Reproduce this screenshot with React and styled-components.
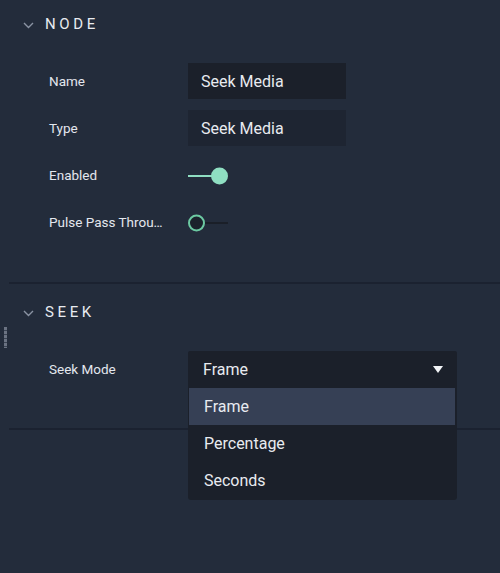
import React, { useState } from "react";
import styled, { createGlobalStyle } from "styled-components";

const GlobalStyle = createGlobalStyle`
  html, body {
    margin: 0;
    padding: 0;
    background: #232c3b;
    font-family: Roboto, "Liberation Sans", sans-serif;
  }
`;

const Panel = styled.div`
  position: relative;
  width: 500px;
  height: 573px;
  padding-left: 9px;
  box-sizing: border-box;
  background: #232c3b;
  color: #e8ebf0;
`;

const Grip = styled.div`
  position: absolute;
  left: 4px;
  top: 327px;
  width: 3px;
  height: 21px;
  background: repeating-linear-gradient(
    to bottom,
    #6b7382 0 3px,
    #3a4352 3px 4px
  );
`;

const Section = styled.section`
  display: flex;
  flex-direction: column;
  padding-bottom: ${(p) => p.$bottom}px;
  border-bottom: 2px solid #1b2230;
`;

const Header = styled.div`
  display: flex;
  align-items: center;
  height: 48px;
  margin-top: ${(p) => p.$top || 0}px;
  padding-left: 14px;
  gap: 11px;
`;

const Title = styled.span`
  font-size: 15px;
  font-weight: 400;
  letter-spacing: 3.6px;
  color: #e8ebf0;
`;

const Rows = styled.div`
  display: flex;
  flex-direction: column;
  gap: 11px;
  margin-top: 15px;
`;

const Row = styled.div`
  display: flex;
  align-items: center;
  height: 36px;
`;

const Label = styled.span`
  width: 116px;
  padding-left: 40px;
  margin-right: 23px;
  flex-shrink: 0;
  font-size: 13.5px;
  color: #e3e7ee;
  white-space: nowrap;
  overflow: hidden;
  text-overflow: ellipsis;
`;

const Field = styled.div`
  width: 158px;
  height: 36px;
  display: flex;
  align-items: center;
  padding-left: 13px;
  box-sizing: border-box;
  background: ${(p) => (p.$muted ? "#1e2532" : "#1b202a")};
  font-size: 16px;
  color: #e8ebf0;
`;

const Toggle = styled.div`
  position: relative;
  width: 40px;
  height: 20px;
  display: flex;
  align-items: center;
  margin-top: 1px;
`;

const Track = styled.div`
  width: ${(p) => (p.$on ? "24px" : "23px")};
  height: 2px;
  margin-left: ${(p) => (p.$on ? "0" : "17px")};
  background: ${(p) => (p.$on ? "#8fdfc2" : "#1a1f28")};
`;

const Thumb = styled.div`
  position: absolute;
  top: 50%;
  left: ${(p) => (p.$on ? "23px" : "0")};
  transform: translateY(-50%);
  width: 17px;
  height: 17px;
  border-radius: 50%;
  box-sizing: border-box;
  background: ${(p) => (p.$on ? "#8fdfc2" : "#1b222c")};
  border: ${(p) => (p.$on ? "none" : "2.5px solid #6cc9a2")};
`;

const Select = styled.div`
  position: relative;
  width: 269px;
`;

const SelectBox = styled.div`
  height: 36px;
  display: flex;
  align-items: center;
  justify-content: space-between;
  padding: 0 14px 0 15px;
  background: #1b202a;
  border-radius: 2px 2px 0 0;
  font-size: 16px;
  color: #e8ebf0;
`;

const Menu = styled.ul`
  position: absolute;
  top: 36px;
  left: 0;
  right: 0;
  margin: 0;
  padding: 1px 2px 1px 1px;
  list-style: none;
  background: #1b202a;
  border-radius: 0 0 3px 3px;
  z-index: 2;
`;

const Option = styled.li`
  height: 37px;
  display: flex;
  align-items: center;
  padding-left: 15px;
  font-size: 16px;
  color: #e8ebf0;
  background: ${(p) => (p.$active ? "#364055" : "transparent")};
`;

const Chevron = () => (
  <svg width="11" height="7" viewBox="0 0 11 7" style={{ marginTop: 2 }}>
    <path d="M1 1l4.5 4.5L10 1" fill="none" stroke="#8a93a3" strokeWidth="1.4" />
  </svg>
);

const Caret = () => (
  <svg width="10" height="7" viewBox="0 0 10 7">
    <path d="M0 0h10L5 7z" fill="#f2f4f7" />
  </svg>
);

function Switch({ on }) {
  return (
    <Toggle>
      <Track $on={on} />
      <Thumb $on={on} />
    </Toggle>
  );
}

export default function App() {
  const [mode] = useState("Frame");
  const options = ["Frame", "Percentage", "Seconds"];

  return (
    <>
      <GlobalStyle />
      <Panel>
        <Grip />
        <Section $bottom={42}>
          <Header>
            <Chevron />
            <Title>NODE</Title>
          </Header>
          <Rows>
            <Row>
              <Label>Name</Label>
              <Field>Seek Media</Field>
            </Row>
            <Row>
              <Label>Type</Label>
              <Field $muted>Seek Media</Field>
            </Row>
            <Row>
              <Label>Enabled</Label>
              <Switch on />
            </Row>
            <Row>
              <Label>Pulse Pass Through</Label>
              <Switch on={false} />
            </Row>
          </Rows>
        </Section>
        <Section $bottom={41}>
          <Header $top={4}>
            <Chevron />
            <Title>SEEK</Title>
          </Header>
          <Rows>
            <Row>
              <Label>Seek Mode</Label>
              <Select>
                <SelectBox>
                  {mode}
                  <Caret />
                </SelectBox>
                <Menu>
                  {options.map((o) => (
                    <Option key={o} $active={o === mode}>
                      {o}
                    </Option>
                  ))}
                </Menu>
              </Select>
            </Row>
          </Rows>
        </Section>
      </Panel>
    </>
  );
}
